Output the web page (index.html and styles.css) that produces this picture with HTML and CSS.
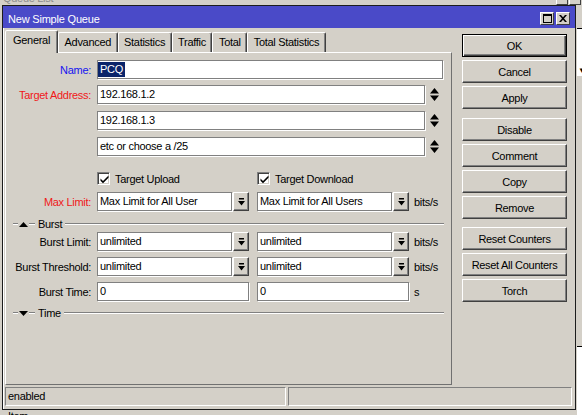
FILE: index.html
```html
<!DOCTYPE html>
<html>
<head>
<meta charset="utf-8">
<title>New Simple Queue</title>
<link rel="stylesheet" href="styles.css">
</head>
<body>
<div class="bgwin">
  <div class="bg-title">
    <span>Queue List</span>
    <span class="bg-tbtns"><span class="bg-tbtn"></span><span class="bg-tbtn"></span></span>
  </div>
  <div class="bg-field"><span class="bg-arrow">&#9660;</span></div>
  <div class="bg-list"></div>
  <div class="bg-item">Item</div>
</div>

<div class="dialog">
  <div class="titlebar">
    <span class="title">New Simple Queue</span>
    <span class="tbtns">
      <span class="tbtn"><svg width="9" height="9" viewBox="0 0 9 9"><path fill-rule="evenodd" d="M0 0h9v9H0z M1 2h7v6H1z"/></svg></span>
      <span class="tbtn"><svg width="8" height="7" viewBox="0 0 8 7"><path d="M0 0h2l2 2.3L6 0h2L5 3.5 8 7H6L4 4.7 2 7H0l3-3.5z"/></svg></span>
    </span>
  </div>

  <div class="body">
    <div class="main">
      <div class="leftcol">
        <div class="tabs">
          <div class="tab active">General</div>
          <div class="tab">Advanced</div>
          <div class="tab">Statistics</div>
          <div class="tab">Traffic</div>
          <div class="tab">Total</div>
          <div class="tab">Total Statistics</div>
        </div>
        <div class="panel">
          <div class="row name-row">
            <span class="lbl blue">Name:</span>
            <div class="field w-name"><span class="sel">PCQ</span></div>
          </div>

          <div class="stack">
            <div class="row">
              <span class="lbl red">Target Address:</span>
              <div class="field w-target">192.168.1.2</div>
              <svg class="spin" width="9" height="13" viewBox="0 0 9 13"><path d="M4.5 0L9 5.5H0z M0 7.5h9L4.5 13z"/></svg>
            </div>
            <div class="row">
              <span class="lbl"></span>
              <div class="field w-target">192.168.1.3</div>
              <svg class="spin" width="9" height="13" viewBox="0 0 9 13"><path d="M4.5 0L9 5.5H0z M0 7.5h9L4.5 13z"/></svg>
            </div>
            <div class="row">
              <span class="lbl"></span>
              <div class="field w-target">etc or choose a /25</div>
              <svg class="spin" width="9" height="13" viewBox="0 0 9 13"><path d="M4.5 0L9 5.5H0z M0 7.5h9L4.5 13z"/></svg>
            </div>
          </div>

          <div class="row checks">
            <span class="lbl"></span>
            <div class="pair">
              <label class="chk"><span class="box"><svg width="9" height="9" viewBox="0 0 9 9"><path d="M0.5 3.5l2.5 2.5 5.5-5.5v2.2L3 8.2 0.5 5.7z"/></svg></span>Target Upload</label>
              <label class="chk"><span class="box"><svg width="9" height="9" viewBox="0 0 9 9"><path d="M0.5 3.5l2.5 2.5 5.5-5.5v2.2L3 8.2 0.5 5.7z"/></svg></span>Target Download</label>
            </div>
          </div>

          <div class="row mt7">
            <span class="lbl red">Max Limit:</span>
            <div class="pair">
              <div class="combo"><div class="field">Max Limit for All User</div><span class="dd"><svg width="7" height="8" viewBox="0 0 7 8"><path d="M1 0h5v1.5H1z M0 3h7L3.5 7.5z"/></svg></span></div>
              <div class="combo"><div class="field">Max Limit for All Users</div><span class="dd"><svg width="7" height="8" viewBox="0 0 7 8"><path d="M1 0h5v1.5H1z M0 3h7L3.5 7.5z"/></svg></span></div>
            </div>
            <span class="unit">bits/s</span>
          </div>

          <div class="sep mt6">
            <span class="seg"></span>
            <svg class="tri" width="9" height="5" viewBox="0 0 9 5"><path d="M4.5 0L9 5H0z"/></svg>
            <span class="seg"></span>
            <span class="sep-text">Burst</span>
            <span class="line"></span>
          </div>

          <div class="row mt1">
            <span class="lbl">Burst Limit:</span>
            <div class="pair">
              <div class="combo"><div class="field">unlimited</div><span class="dd"><svg width="7" height="8" viewBox="0 0 7 8"><path d="M1 0h5v1.5H1z M0 3h7L3.5 7.5z"/></svg></span></div>
              <div class="combo"><div class="field">unlimited</div><span class="dd"><svg width="7" height="8" viewBox="0 0 7 8"><path d="M1 0h5v1.5H1z M0 3h7L3.5 7.5z"/></svg></span></div>
            </div>
            <span class="unit">bits/s</span>
          </div>

          <div class="row mt6">
            <span class="lbl">Burst Threshold:</span>
            <div class="pair">
              <div class="combo"><div class="field">unlimited</div><span class="dd"><svg width="7" height="8" viewBox="0 0 7 8"><path d="M1 0h5v1.5H1z M0 3h7L3.5 7.5z"/></svg></span></div>
              <div class="combo"><div class="field">unlimited</div><span class="dd"><svg width="7" height="8" viewBox="0 0 7 8"><path d="M1 0h5v1.5H1z M0 3h7L3.5 7.5z"/></svg></span></div>
            </div>
            <span class="unit">bits/s</span>
          </div>

          <div class="row mt6">
            <span class="lbl">Burst Time:</span>
            <div class="pair">
              <div class="field cellw">0</div>
              <div class="field cellw">0</div>
            </div>
            <span class="unit">s</span>
          </div>

          <div class="sep mt5">
            <span class="seg"></span>
            <svg class="tri" width="9" height="5" viewBox="0 0 9 5"><path d="M0 0h9L4.5 5z"/></svg>
            <span class="seg"></span>
            <span class="sep-text">Time</span>
            <span class="line"></span>
          </div>
        </div>
      </div>

      <div class="btns">
        <div class="grp g1">
          <div class="btn default">OK</div>
          <div class="btn">Cancel</div>
          <div class="btn">Apply</div>
        </div>
        <div class="grp g2">
          <div class="btn">Disable</div>
          <div class="btn">Comment</div>
          <div class="btn">Copy</div>
          <div class="btn">Remove</div>
        </div>
        <div class="grp">
          <div class="btn">Reset Counters</div>
          <div class="btn">Reset All Counters</div>
          <div class="btn">Torch</div>
        </div>
      </div>
    </div>

    <div class="status">
      <div class="scell c1">enabled</div>
      <div class="scell c2"></div>
    </div>
  </div>
</div>
</body>
</html>
```

FILE: styles.css
```css
* { box-sizing: border-box; }

html, body {
  margin: 0;
  padding: 0;
}

body {
  width: 582px;
  height: 415px;
  overflow: hidden;
  position: relative;
  background: #d4d0c8;
  font-family: "Liberation Sans", Arial, sans-serif;
  font-size: 11px;
  letter-spacing: -0.3px;
  color: #000;
}

/* ---------- background window ---------- */
.bgwin {
  position: absolute;
  left: 0;
  top: -12px;
  width: 582px;
  height: 440px;
}

.bg-title {
  height: 17px;
  display: flex;
  align-items: flex-end;
  padding-left: 3px;
  color: #8c8c8c;
  line-height: 13px;
}

.bg-tbtns {
  margin-left: auto;
  display: flex;
  gap: 1px;
  margin-right: 1px;
  align-self: flex-start;
  margin-top: 2px;
}

.bg-tbtn {
  width: 12px;
  height: 15px;
  border: 1px solid;
  border-color: #fff #404040 #404040 #fff;
}

.bg-field {
  position: absolute;
  left: 577px;
  top: 40px;
  width: 10px;
  height: 48px;
  background: #fff;
  border-top: 1px solid #000;
}

.bg-arrow {
  position: absolute;
  left: 1px;
  top: 38px;
  font-size: 8px;
  line-height: 8px;
}

.bg-list {
  position: absolute;
  left: 577px;
  top: 358px;
  width: 10px;
  height: 70px;
  background: #fff;
  border-top: 1px solid #000;
}

.bg-item {
  position: absolute;
  left: 8px;
  top: 422px;
  line-height: 12px;
}

/* ---------- dialog ---------- */
.dialog {
  position: absolute;
  left: 2px;
  top: 5px;
  width: 574px;
  height: 405px;
  border: 1px solid #1c1c1c;
  background: #d4d0c8;
  display: flex;
  flex-direction: column;
}

.titlebar {
  height: 22px;
  flex: none;
  background: #4a4ac8;
  color: #fff;
  display: flex;
  align-items: center;
  padding: 3px 5px 0 5px;
  font-size: 11px;
  letter-spacing: -0.2px;
}

.tbtns {
  margin-left: auto;
  display: flex;
  gap: 2px;
}

.tbtn {
  width: 14px;
  height: 13px;
  background: #d4d0c8;
  border: 1px solid;
  border-color: #fff #404040 #404040 #fff;
  display: flex;
  align-items: center;
  justify-content: center;
}

.body {
  flex: 1;
  display: flex;
  flex-direction: column;
  padding: 2px 3px 3px 2px;
  box-shadow: inset 1px 0 #ffffff;
}

.main {
  flex: 1;
  display: flex;
  gap: 10px;
  padding-right: 4px;
}

.leftcol {
  width: 447px;
  display: flex;
  flex-direction: column;
}

/* tabs */
.tabs {
  height: 22px;
  flex: none;
  display: flex;
  align-items: flex-end;
}

.tab {
  height: 20px;
  padding: 0 5.5px;
  line-height: 18px;
  border: 1px solid;
  border-bottom: 0;
  border-color: #fff #404040 transparent #fff;
  border-radius: 2px 2px 0 0;
  box-shadow: inset -1px 0 #808080;
  white-space: nowrap;
}

.tab.active {
  height: 23px;
  margin-bottom: -1px;
  padding: 0 7px;
  line-height: 19px;
  position: relative;
  z-index: 1;
  background: #d4d0c8;
}

.panel {
  flex: 1;
  border: 1px solid;
  border-color: #fff #707070 #707070 #fff;
  padding: 7px 7px 0 0;
  display: flex;
  flex-direction: column;
}

/* form rows */
.row {
  display: flex;
  align-items: center;
  height: 19px;
  flex: none;
}

.lbl {
  width: 85px;
  flex: none;
  margin-right: 6px;
  text-align: right;
  white-space: nowrap;
}

.blue { color: #1515f0; }
.red { color: #f01818; }

.field {
  height: 19px;
  background: #fff;
  border: 1px solid #808080;
  box-shadow: 1px 1px 0 #ffffff;
  padding-left: 2px;
  line-height: 17px;
  white-space: nowrap;
  overflow: hidden;
}

.w-name {
  width: 346px;
  padding-left: 0;
}

.sel {
  display: inline-block;
  background: #0a246a;
  color: #fff;
  padding: 0 2px;
  line-height: 15px;
  margin-top: 1px;
  vertical-align: top;
}

.name-row { margin-bottom: 6px; }

.stack {
  display: flex;
  flex-direction: column;
  gap: 7px;
}

.w-target { width: 328px; }

.spin {
  margin-left: 5px;
  flex: none;
}

.checks {
  margin-top: 16px;
  height: 13px;
}

.pair {
  display: flex;
  gap: 8px;
}

.chk {
  width: 152px;
  display: flex;
  align-items: center;
  gap: 5px;
  white-space: nowrap;
  line-height: 14px;
  padding-top: 1px;
}

.box {
  width: 13px;
  height: 13px;
  flex: none;
  margin-top: -1px;
  background: #fff;
  border: 1px solid;
  border-color: #808080 #fff #fff #808080;
  box-shadow: inset 1px 1px #404040, inset -1px -1px #d4d0c8;
  display: flex;
  align-items: center;
  justify-content: center;
  padding: 1px 0 0 1px;
}

.combo {
  width: 152px;
  display: flex;
  gap: 1px;
}

.combo .field { flex: 1; }

.cellw { width: 152px; }

.dd {
  width: 16px;
  height: 19px;
  flex: none;
  background: #d4d0c8;
  border: 1px solid;
  border-color: #fff #404040 #404040 #fff;
  box-shadow: inset -1px -1px #808080;
  display: flex;
  align-items: center;
  justify-content: center;
}

.unit {
  margin-left: 5px;
  white-space: nowrap;
}

.mt1 { margin-top: 1px; }
.mt5 { margin-top: 5px; }
.mt6 { margin-top: 6px; }
.mt7 { margin-top: 7px; }

/* group separators */
.sep {
  display: flex;
  align-items: center;
  height: 14px;
  flex: none;
  margin-left: 7px;
}

.seg, .line {
  height: 2px;
  border-top: 1px solid #808080;
  border-bottom: 1px solid #ffffff;
}

.seg { width: 5px; flex: none; }
.seg + .tri + .seg { width: 6px; }

.tri {
  margin: 0 1px;
  flex: none;
}

.sep-text {
  margin: 0 3px;
  line-height: 14px;
}

.line { flex: 1; }

/* buttons */
.btns {
  width: 105px;
  flex: none;
  padding-top: 4px;
  display: flex;
  flex-direction: column;
  gap: 8px;
}

.grp {
  display: flex;
  flex-direction: column;
  gap: 3px;
}

.g1 { margin-bottom: 1px; }

.btn {
  height: 23px;
  border: 1px solid;
  border-color: #fff #404040 #404040 #fff;
  box-shadow: inset -1px -1px #808080;
  display: flex;
  align-items: center;
  justify-content: center;
  white-space: nowrap;
}

.btn.default {
  border: 1px solid #000;
  box-shadow: inset 1px 1px #fff, inset -1px -1px #404040, inset -2px -2px #808080;
}

/* status bar */
.status {
  height: 19px;
  flex: none;
  margin-top: 2px;
  display: flex;
  gap: 2px;
}

.scell {
  border: 1px solid;
  border-color: #808080 #fff #fff #808080;
  line-height: 17px;
  padding-left: 2px;
}

.c1 { width: 281px; }
.c2 { flex: 1; }
```
